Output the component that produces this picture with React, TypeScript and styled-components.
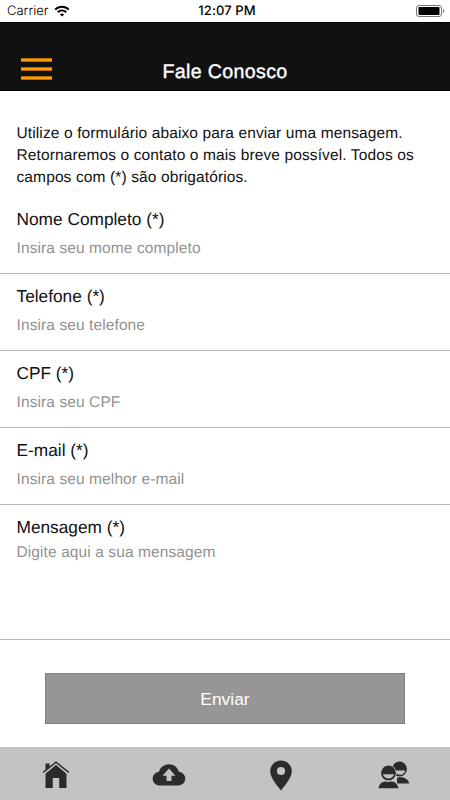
import React from "react";
import styled, { createGlobalStyle } from "styled-components";

const GlobalStyle = createGlobalStyle`
  * { box-sizing: border-box; }
  body { margin: 0; background: #fff; }
`;

const Screen = styled.div`
  width: 450px;
  height: 800px;
  display: flex;
  flex-direction: column;
  overflow: hidden;
  background: #fff;
  color: #111;
  font-family: "Liberation Sans", Arial, sans-serif;
  text-rendering: geometricPrecision;
`;

const StatusBar = styled.div`
  height: 22px;
  flex: none;
  display: grid;
  grid-template-columns: 1fr auto 1fr;
  align-items: center;
  padding: 0 5px 0 7px;
  font-family: Inter, sans-serif;
  font-size: 13px;
  line-height: 22px;
  color: #000;
`;

const Carrier = styled.div`
  display: flex;
  align-items: center;
  gap: 6px;
  font-weight: 300;
`;

const Clock = styled.div`
  font-weight: 500;
  letter-spacing: 0.1px;
  padding-left: 2px;
`;

const BatterySlot = styled.div`
  display: flex;
  justify-content: flex-end;
`;

const Header = styled.header`
  height: 69px;
  flex: none;
  display: grid;
  grid-template-columns: 1fr auto 1fr;
  align-items: end;
  padding: 0 21px 6px;
  background: #111;
  border-top: 1px solid #000;
  border-bottom: 1px solid #000;
`;

const MenuButton = styled.button`
  width: 31px;
  height: 22px;
  margin: 0 0 4px;
  padding: 0;
  border: 0;
  background: none;
  display: flex;
  flex-direction: column;
  justify-content: space-between;
`;

const MenuLine = styled.span`
  height: 4px;
  width: 31px;
  background: linear-gradient(#b56d05 0 1px, #ff9b05 1px 3px, #b56d05 3px);
`;

const Title = styled.h1`
  margin: 0;
  font-size: 19.6px;
  line-height: 24px;
  font-weight: 400;
  letter-spacing: 0.35px;
  color: #fff;
  -webkit-text-stroke: 0.4px #fff;
`;

const Form = styled.form`
  flex: 1;
  display: flex;
  flex-direction: column;
`;

const Intro = styled.p`
  height: 106px;
  flex: none;
  margin: 0;
  padding: 32px 16px 0 16.5px;
  font-size: 15.5px;
  line-height: 22px;
  letter-spacing: 0.12px;
  white-space: nowrap;
`;

const Field = styled.label<{ $tall?: boolean }>`
  height: ${(p) => (p.$tall ? 135 : 77)}px;
  flex: none;
  display: flex;
  flex-direction: column;
  gap: ${(p) => (p.$tall ? 6 : 10)}px;
  padding: 12px 16px 0 16.5px;
  border-bottom: 1px solid #b9b9b9;
`;

const FieldName = styled.span`
  font-size: 17.3px;
  line-height: 20px;
`;

const Hint = styled.span`
  font-size: 15.5px;
  line-height: 20px;
  letter-spacing: 0.1px;
  color: #929292;
`;

const Submit = styled.button`
  width: 360px;
  height: 51px;
  margin: 33px auto 0;
  padding: 2px 0 0;
  border: 1px solid #7f7f7f;
  background: #969696;
  color: #fff;
  font-family: inherit;
  font-size: 17.4px;
`;

const TabBar = styled.nav`
  height: 53px;
  flex: none;
  display: grid;
  grid-template-columns: repeat(4, 1fr);
  background: #c3c3c3;
`;

const Tab = styled.a`
  display: flex;
  align-items: center;
  justify-content: center;
  padding-top: 3px;
`;

const fields = [
  ["Nome Completo (*)", "Insira seu mome completo"],
  ["Telefone (*)", "Insira seu telefone"],
  ["CPF (*)", "Insira seu CPF"],
  ["E-mail (*)", "Insira seu melhor e-mail"],
  ["Mensagem (*)", "Digite aqui a sua mensagem"],
];

const ink = "#2b2b2b";

const WifiIcon = () => (
  <svg width="16" height="12" viewBox="0 0 16 12" fill="none" stroke="#000" strokeWidth="2">
    <path d="M1.2 4.6C5 .7 11 .7 14.8 4.6" />
    <path d="M3.8 7.2c2.4-2.3 6-2.3 8.4 0" />
    <path d="M8 11.5 5.9 9.4c1.2-1.1 3-1.1 4.2 0Z" fill="#000" stroke="none" />
  </svg>
);

const BatteryIcon = () => (
  <svg width="29" height="12" viewBox="0 0 29 12">
    <rect x=".5" y=".5" width="25" height="11" rx="2.5" fill="none" stroke="#777" />
    <rect x="2.5" y="2" width="21" height="8" rx=".7" fill="#000" />
    <path d="M27 4c1.8.6 1.8 3.4 0 4Z" fill="#777" />
  </svg>
);

const HomeIcon = () => (
  <svg width="28" height="28" viewBox="0 0 28 28">
    <path d="M3.5 2.5h4v6l-4 3.5Z" fill={ink} />
    <path d="M3.5 12.5 14 3.5l10.5 9V27h-7.3V17h-6.4v10H3.5Z" fill={ink} />
    <path d="M1.8 12.3 14 2.3l12.2 10" fill="none" stroke="#c3c3c3" strokeWidth="2.6" />
    <path d="m1.2 11.4 12.8-10.2 12.8 10.2" fill="none" stroke={ink} strokeWidth="1.4" />
  </svg>
);

const CloudIcon = () => (
  <svg width="34" height="24" viewBox="0 0 34 24">
    <path
      d="M8.2 22.5C3.9 22.5.7 19.5.7 15.7c0-3.6 2.7-6.5 6.2-7C8.5 4 12.2 1.2 17 1.2c4.9 0 8.8 3.1 9.8 7.6 3.6.4 6.5 3.3 6.5 6.8 0 3.9-3.1 6.9-7 6.9Z"
      fill={ink}
    />
    <path d="M17 5.5 10.5 12.8h4V18h5v-5.2h4Z" fill="#c3c3c3" />
  </svg>
);

const PinIcon = () => (
  <svg width="22" height="31" viewBox="0 0 22 31">
    <path
      fillRule="evenodd"
      d="M11 .5C5 .5.2 5.2.2 11 .2 17.5 6 24 11 30.5 16 24 21.8 17.5 21.8 11 21.8 5.2 17 .5 11 .5Zm0 6.4a4.1 4.1 0 1 1 0 8.2 4.1 4.1 0 0 1 0-8.2Z"
      fill={ink}
    />
  </svg>
);

const PeopleIcon = () => (
  <svg width="32" height="28" viewBox="0 0 32 28">
    <ellipse cx="21.5" cy="8" rx="7.4" ry="7.4" fill={ink} />
    <path d="M16.5 9.4h10.8c-.7 2.6-2.6 4.3-4.9 4.3-2.4 0-4.9-1.7-5.9-4.3Z" fill="#c3c3c3" />
    <path d="M19 22.5v-5.8c6-1.6 11.2.7 12.2 5.8Z" fill={ink} />
    <circle cx="10.5" cy="12.2" r="8.2" fill="#c3c3c3" />
    <path d="M0 28c-.2-7 4.8-9.2 10.5-9.2S21.3 21 21.2 28Z" fill="#c3c3c3" />
    <circle cx="10.5" cy="12" r="7.4" fill={ink} />
    <path d="M4.9 13.2h11.2c-.7 2.5-2.9 4.2-5.6 4.2s-4.9-1.7-5.6-4.2Z" fill="#c3c3c3" />
    <path d="M.5 27.3c.6-4.3 3.5-6.8 7.4-6.8 1.5.7 3.6.7 5.1 0 3.9 0 6.8 2.5 7.4 6.8Z" fill={ink} />
  </svg>
);

export default function App() {
  return (
    <Screen>
      <GlobalStyle />
      <StatusBar>
        <Carrier>
          <span>Carrier</span>
          <WifiIcon />
        </Carrier>
        <Clock>12:07 PM</Clock>
        <BatterySlot>
          <BatteryIcon />
        </BatterySlot>
      </StatusBar>
      <Header>
        <MenuButton type="button" aria-label="Menu">
          <MenuLine />
          <MenuLine />
          <MenuLine />
        </MenuButton>
        <Title>Fale Conosco</Title>
      </Header>
      <Form>
        <Intro>
          Utilize o formulário abaixo para enviar uma mensagem.
          <br />
          Retornaremos o contato o mais breve possível. Todos os
          <br />
          campos com (*) são obrigatórios.
        </Intro>
        {fields.map(([name, hint], i) => (
          <Field key={name} $tall={i === 4}>
            <FieldName>{name}</FieldName>
            <Hint>{hint}</Hint>
          </Field>
        ))}
        <Submit type="button">Enviar</Submit>
      </Form>
      <TabBar>
        <Tab><HomeIcon /></Tab>
        <Tab><CloudIcon /></Tab>
        <Tab><PinIcon /></Tab>
        <Tab><PeopleIcon /></Tab>
      </TabBar>
    </Screen>
  );
}
